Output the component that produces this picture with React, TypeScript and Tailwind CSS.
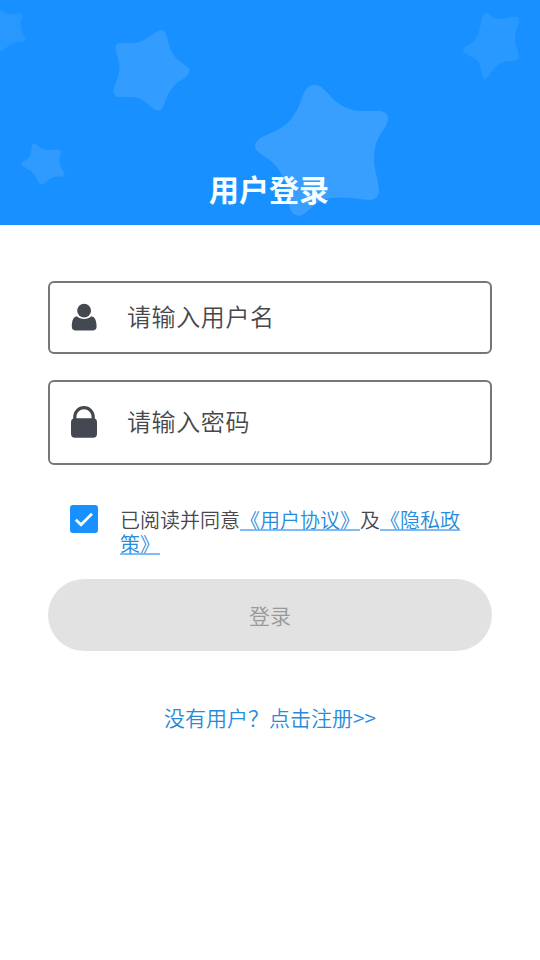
import React, { useState } from "react";

function Stars() {
  return (
    <svg className="absolute inset-0" width="540" height="225" viewBox="0 0 540 225" aria-hidden="true">
      <path fill="#2898ff" d="M-4 10Q0 9 3 12C9 16 15 13 20 13Q23 13 22.500 17C21 22 19.500 26 22 31C23 34 26 37 25.500 40Q24 42 20 42C13 42 9 45 5 49Q1 52 -4 51Z" />
      <path fill="#339dff" d="M158 31Q163 28 165.500 33C169 42 169 50 176 58C181 64 189.500 66 189.500 71Q189 75 183 79C174 84 169 90 164 105C162 110 159 112 154 109C147 104 142 97 132 97L118 97Q112 95 114 88C117 80 120 72 119.500 65C119 57 114 51 116 45Q118 42 123 43C132 43 139 44 147 38C151 35 155 33 158 31Z" />
      <path fill="#2f9bff" d="M32 145Q34 143 36 144.500C40 147 43 150 48 150L59 149.500Q61.500 150 61 153C59 158 59 162 61 167C62 170 65 173 64.500 175Q63 177 60 176.500C54 176 50 178 46 182Q41 186 39 183C36 179 36 176 32 172C29 169 21 167 21 164Q22 162 26 160C31 157 31 153 32 145Z" />
      <path fill="#2999ff" d="M483 15Q485 12 488 13.500C492 16 494 19 499 19C506 19 512 16 517 17Q519.500 18 519 22C517 28 515 32 515 39C515 46 519 51 519 57Q518 61 513 61C503 61 499 64 494 69C490 73 488 79 484 78.500C481 77 482 69 479 63C475 56 463 55 463 50.500C463 47 471 45 476 38C480 32 481 22 483 15Z" />
      <path fill="#389fff" d="M307 88Q313 82 321 87C331 94 336 109 361 111L381 111Q389 113 388 120C385 133 374 135 374 160C374 170 379 180 379 193Q377 200 369 200C350 198 335 195 320 201C312 206 306 214 300 216Q291 216 289 205C288 190 286 175 271 161C265 156 255 152 255 146Q255 141 262 137C278 130 288 127 297 110C301 102 303 93 307 88Z" />
    </svg>
  );
}

function UserIcon() {
  return (
    <svg className="mb-0.5" width="28" height="30" viewBox="0 0 28 30" fill="#444851" aria-hidden="true">
      <circle cx="14.100" cy="8.700" r="6.900" />
      <path d="M6.800 14.300C9 16.100 11.300 16.900 14.100 16.900S19.200 16.100 21.400 14.300C25 15 26.600 19 26.600 24.500Q26.600 28.500 22.500 28.500H5.900Q1.800 28.500 1.800 24.500C1.800 19 3.200 15 6.800 14.300Z" />
    </svg>
  );
}

function LockIcon() {
  return (
    <svg className="mb-px" width="28" height="34" viewBox="0 0 28 34" aria-hidden="true">
      <path d="M4.800 15V11.800A9.200 9.200 0 0 1 23.200 11.800V15" fill="none" stroke="#444851" strokeWidth="3.200" />
      <rect x="1" y="13.200" width="26" height="19.500" rx="4" fill="#444851" />
    </svg>
  );
}

export default function App() {
  const [agreed, setAgreed] = useState(true);
  const field = "mb-1 min-w-0 flex-1 bg-transparent text-2xl tracking-[0.6px] text-[#47474c] outline-none placeholder:text-[#47474c] placeholder:opacity-100";
  const link = "text-[#268bdd] underline decoration-[#7fbcf5] decoration-2 underline-offset-1";
  return (
    <main className="flex h-screen w-full flex-col bg-white font-['Noto_Sans_CJK_SC',sans-serif] font-[350]">
      <header className="relative flex h-[225px] shrink-0 items-end justify-center overflow-hidden bg-[#1890ff] pr-0.5 pb-[15px]">
        <Stars />
        <h1 className="relative text-[30px] leading-[44px] font-bold text-[#f7feff]">用户登录</h1>
      </header>
      <form className="flex flex-col px-12 pt-14" onSubmit={(e) => e.preventDefault()}>
        <label className="flex h-[73px] items-center gap-[29px] rounded-md border-2 border-[#77767c] pl-5">
          <UserIcon />
          <input className={field} placeholder="请输入用户名" />
        </label>
        <label className="mt-[26px] flex h-[85px] items-center gap-[29px] rounded-md border-2 border-[#77767c] pl-5">
          <LockIcon />
          <input className={field} type="password" placeholder="请输入密码" />
        </label>
        <div className="mt-10 flex h-[74px] items-start pl-[22px]">
          <button type="button" role="checkbox" aria-checked={agreed} aria-label="已阅读并同意" onClick={() => setAgreed(!agreed)} className="flex size-7 shrink-0 items-center justify-center rounded-[3px] bg-[#1890ff]">
            {agreed && (
              <svg width="28" height="28" viewBox="0 0 28 28" fill="none" stroke="#f5fdff" strokeWidth="2.800">
                <path d="M5.800 14.800L11 19.800L22 8.800" />
              </svg>
            )}
          </button>
          <p className="ml-[22px] mt-[3px] w-[350px] text-xl leading-6 text-[#47474c]">
            已阅读并同意<a className={link}>《用户协议》</a>及<a className={link}>《隐私政策》</a>
          </p>
        </div>
        <button type="submit" className="h-[72px] rounded-full bg-[#e2e2e2] pt-0.5 text-[21px] text-[#999]">登录</button>
        <a className="mt-[50px] self-center text-[21px] leading-8 text-[#268bdd]">没有用户？点击注册&gt;&gt;</a>
      </form>
    </main>
  );
}
